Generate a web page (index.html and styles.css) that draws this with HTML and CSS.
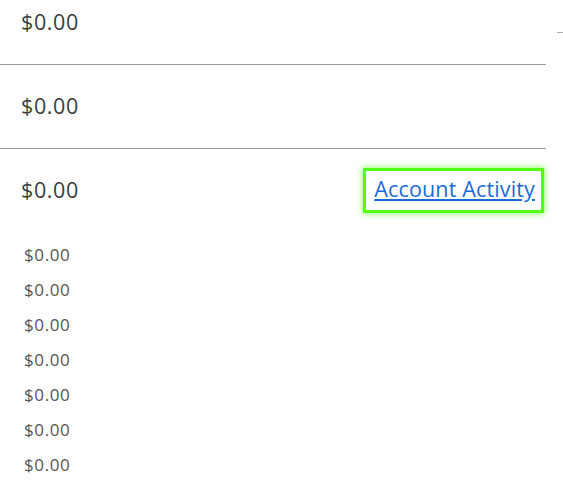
FILE: index.html
```html
<!DOCTYPE html>
<html lang="en">
<head>
  <meta charset="UTF-8">
  <title>Balances</title>
  <link rel="stylesheet" href="styles.css">
</head>
<body>

  <div class="saldos">
    <div class="fila">
      <span class="monto">$0.00</span>
    </div>
    <div class="fila">
      <span class="monto">$0.00</span>
    </div>
    <div class="fila sin-linea">
      <span class="monto">$0.00</span>
      <a href="#" class="enlace foco">Account Activity</a>
    </div>

    <ul class="detalle">
      <li>$0.00</li>
      <li>$0.00</li>
      <li>$0.00</li>
      <li>$0.00</li>
      <li>$0.00</li>
      <li>$0.00</li>
      <li>$0.00</li>
    </ul>
  </div>

  <div class="marca"></div>

</body>
</html>
```

FILE: styles.css
```css
body {
  margin: 0;
  background-color: #fff;
  font-family: "Open Sans", Arial, sans-serif;
  color: #3d3d3d;
}

.saldos {
  width: 546px;
  margin-top: -19px;
}

.fila {
  display: flex;
  justify-content: space-between;
  align-items: center;
  height: 83px;
  padding: 0 5px 0 21px;
  border-bottom: 1px solid #9a9a9a;
}

.sin-linea {
  border-bottom: none;
}

.monto {
  font-size: 21.5px;
  letter-spacing: 0.6px;
  margin-top: -2px;
}

.enlace {
  color: #1a6dd8;
  font-size: 21.5px;
  letter-spacing: 0.15px;
  padding: 3px 6px 7px 8px;
}

.foco {
  outline: 3px solid #55ff11;
  box-shadow: 0 0 6px 4px #9cff70;
}

.detalle {
  list-style: none;
  margin: 5px 0 0;
  padding: 0 0 0 24px;
}

.detalle li {
  font-size: 17px;
  line-height: 35px;
  color: #555;
  letter-spacing: 0.6px;
}

.marca {
  position: absolute;
  top: 32px;
  left: 557px;
  width: 6px;
  height: 1px;
  background-color: #aaa;
}
```
